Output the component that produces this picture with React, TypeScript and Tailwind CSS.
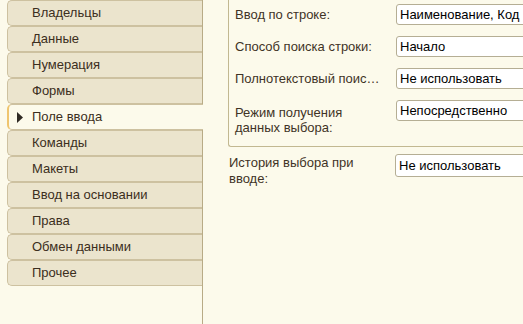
import React from 'react';

const tabs = [
  'Владельцы',
  'Данные',
  'Нумерация',
  'Формы',
  'Поле ввода',
  'Команды',
  'Макеты',
  'Ввод на основании',
  'Права',
  'Обмен данными',
  'Прочее',
];

const ACTIVE = 'Поле ввода';

const Field = ({ value, tall }: { value: string; tall?: boolean }) => (
  <div
    className={`${tall ? 'h-[23px] leading-[21px]' : 'h-[21px] leading-[19px]'} w-[160px] shrink-0 rounded-[3px] border border-[#b5ae94] bg-white pl-[3px] text-[13px] text-black whitespace-nowrap overflow-hidden`}
  >
    {value}
  </div>
);

const Row = ({ label, value }: { label: string; value: string }) => (
  <div className="flex items-start h-[32px] pt-[4px]">
    <div className="w-[161px] shrink-0 pr-[9px] text-[13px] leading-[21px] text-[#3f3326] whitespace-nowrap">
      {label}
    </div>
    <Field value={value} />
  </div>
);

export default function App() {
  return (
    <div className="w-[523px] h-[324px] bg-[#fcfaeb] flex overflow-hidden font-['Liberation_Sans',Arial,sans-serif]">
      {/* tabs column */}
      <div className="w-[203px] shrink-0 h-full border-r border-[#b8ab86] pl-[7px] flex flex-col">
        {tabs.map((t) => {
          const active = t === ACTIVE;
          return (
            <div
              key={t}
              className={
                active
                  ? 'relative -mr-px h-[26px] shrink-0 rounded-l-[5px] border border-r-0 border-[#cdc1a0] border-l-2 border-l-[#efc56f] bg-[#fcfaeb] flex items-center text-[13px] text-[#3b2e20]'
                  : 'h-[26px] shrink-0 rounded-l-[5px] border border-r-0 border-[#cdc1a0] bg-[#ebe4cd] flex items-center text-[13px] text-[#3b2e20]'
              }
            >
              {active ? (
                <>
                  <svg width="6" height="11" viewBox="0 0 6 11" className="ml-[8px] mr-[9px]">
                    <path d="M0 0 L6 5.5 L0 11 Z" fill="#2f2a24" />
                  </svg>
                  <span>{t}</span>
                </>
              ) : (
                <span className="pl-[24px]">{t}</span>
              )}
            </div>
          );
        })}
      </div>

      {/* properties */}
      <div className="flex-1 flex flex-col pl-[25px]">
        <div className="border-l border-b border-[#c2b891] rounded-bl-[3px] pl-[6px]">
          <Row label="Ввод по строке:" value="Наименование, Код" />
          <Row label="Способ поиска строки:" value="Начало" />
          <Row label="Полнотекстовый поис…" value="Не использовать" />
          <div className="flex items-start h-[50px] pt-[4px]">
            <div className="w-[161px] shrink-0 pt-[5px] pr-[9px] text-[13px] leading-[15px] text-[#3f3326]">
              Режим получения
              <br />
              данных выбора:
            </div>
            <Field value="Непосредственно" />
          </div>
        </div>
        <div className="flex items-start pt-[7px] pl-[1px]">
          <div className="w-[166px] shrink-0 pt-[1px] text-[13px] leading-[16px] text-[#3f3326]">
            История выбора при
            <br />
            вводе:
          </div>
          <Field value="Не использовать" tall />
        </div>
      </div>
    </div>
  );
}
